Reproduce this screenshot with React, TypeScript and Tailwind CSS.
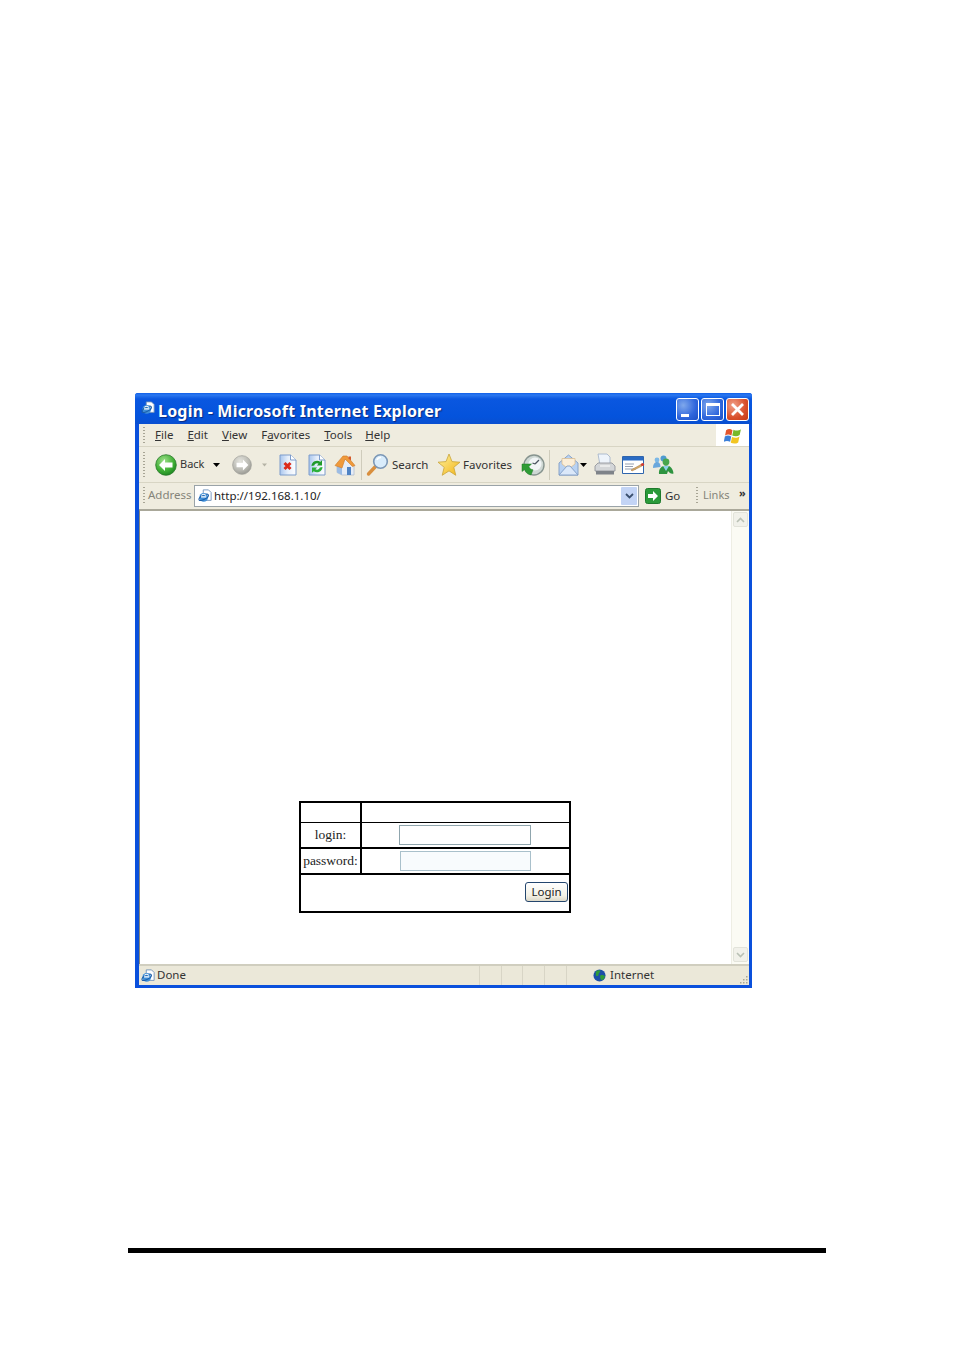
const ui = { fontFamily: '"Noto Sans", "Liberation Sans", sans-serif' };

function IePage({ size = 14 }: { size?: number }) {
  return (
    <svg width={size} height={size} viewBox="0 0 16 16" className="shrink-0">
      <path d="M6 1h6l3 3v9H6z" fill="#fff" stroke="#6d8fb8" strokeWidth="1" />
      <circle cx="6.5" cy="9.5" r="5" fill="#3f8fd8" />
      <ellipse cx="6.5" cy="9.5" rx="6" ry="2.4" fill="none" stroke="#1b5ea8" strokeWidth="1.2" transform="rotate(-30 6.5 9.5)" />
      <path d="M3.5 9h6M4 7.5c1-2 4-2 5 0" stroke="#fff" strokeWidth="1.2" fill="none" />
    </svg>
  );
}

function CircleArrow({ gray = false }: { gray?: boolean }) {
  const id = gray ? "fwd" : "back";
  return (
    <svg width={gray ? 20 : 22} height={gray ? 20 : 22} viewBox="0 0 22 22" className="shrink-0">
      <defs>
        <radialGradient id={id} cx="0.4" cy="0.3" r="0.8">
          <stop offset="0" stopColor={gray ? "#e4e4de" : "#9fe08a"} />
          <stop offset="0.6" stopColor={gray ? "#b9b9b2" : "#3fae35"} />
          <stop offset="1" stopColor={gray ? "#8f8f88" : "#137a1c"} />
        </radialGradient>
      </defs>
      <circle cx="11" cy="11" r="10.3" fill={`url(#${id})`} stroke={gray ? "#a0a09a" : "#2a7a2a"} strokeWidth="0.8" />
      {gray ? (
        <path d="M12 5l6 6-6 6v-3.600H5V8.600h7z" fill="#fff" />
      ) : (
        <path d="M10 5l-6 6 6 6v-3.600h7.500V8.600H10z" fill="#fff" />
      )}
    </svg>
  );
}

function Caret({ color = "#000", w = 7 }: { color?: string; w?: number }) {
  return (
    <svg width={w} height="4" viewBox="0 0 7 4" className="shrink-0">
      <path d="M0 0h7L3.500 4z" fill={color} />
    </svg>
  );
}

function PageSheet({ id }: { id: string }) {
  return (
    <>
      <defs>
        <linearGradient id={id} x1="0" y1="0" x2="1" y2="0">
          <stop offset="0" stopColor="#a9c6ee" />
          <stop offset="0.5" stopColor="#e6effb" />
          <stop offset="1" stopColor="#fdfeff" />
        </linearGradient>
      </defs>
      <path d="M1 1h10.500L17 6v15H1z" fill={`url(#${id})`} stroke="#7d9ccb" />
      <path d="M11.500 1v5H17" fill="#fff" stroke="#7d9ccb" />
    </>
  );
}

function StopIcon() {
  return (
    <svg width="18" height="22" viewBox="0 0 18 22" className="shrink-0">
      <PageSheet id="stopPage" />
      <path d="M5.500 9l6 6M11.500 9l-6 6" stroke="#dc2a1a" strokeWidth="3" />
    </svg>
  );
}

function RefreshIcon() {
  return (
    <svg width="18" height="22" viewBox="0 0 18 22" className="shrink-0">
      <PageSheet id="refreshPage" />
      <path d="M3.500 12a5.500 5.500 0 0 1 8.800-4.200L14 6.200v5.300H8.800l1.800-1.800a3 3 0 0 0-4.400 1.800z" fill="#1f9a2a" />
      <path d="M14.500 13a5.500 5.500 0 0 1-8.800 4.200L4 18.800v-5.300h5.200l-1.800 1.800a3 3 0 0 0 4.400-1.800z" fill="#2bb03a" />
    </svg>
  );
}

function HomeIcon() {
  return (
    <svg width="22" height="22" viewBox="0 0 22 22" className="shrink-0">
      <path d="M3 11l2.500-2L12 5l8 6v10H8l-5-2.500z" fill="#e6edf7" stroke="#a9b8cc" strokeWidth="0.700" />
      <path d="M3 11l5 3v7l-5-2.500z" fill="#9cbce4" />
      <path d="M1 11.500L9 2h4l8 9.500-2.500 1L11 5 8 14z" fill="#ef9a3c" stroke="#cf7a26" strokeWidth="0.600" />
      <path d="M13 13h4v8h-4z" fill="#4f83c4" />
      <path d="M14.500 2.500h2.500v4l-2.500-2z" fill="#d45a2a" />
    </svg>
  );
}

function SearchIcon() {
  return (
    <svg width="24" height="24" viewBox="0 0 24 24" className="shrink-0">
      <path d="M9.500 13.500L2.500 21" stroke="#d98f3e" strokeWidth="3.400" strokeLinecap="round" />
      <circle cx="14.500" cy="8.500" r="6.800" fill="#d9ecfb" stroke="#7b97b6" strokeWidth="1.600" />
      <path d="M11 7a4 4 0 0 1 4-2.500" stroke="#fff" strokeWidth="1.600" fill="none" />
    </svg>
  );
}

function StarIcon() {
  return (
    <svg width="24" height="24" viewBox="0 0 24 24" className="shrink-0">
      <defs>
        <linearGradient id="star" x1="0" y1="0" x2="1" y2="1">
          <stop offset="0" stopColor="#fff3a0" />
          <stop offset="1" stopColor="#f2b416" />
        </linearGradient>
      </defs>
      <path d="M12 1l3 7.600 8 .6-6.200 5.100 2 8-6.800-4.400-6.800 4.400 2-8L1 9.200l8-.6z" fill="url(#star)" stroke="#c9a43a" strokeWidth="0.800" />
    </svg>
  );
}

function HistoryIcon() {
  return (
    <svg width="24" height="24" viewBox="0 0 24 24" className="shrink-0">
      <circle cx="13" cy="12" r="10" fill="#cfd8d4" stroke="#87948f" strokeWidth="1.400" />
      <circle cx="14" cy="11" r="6.500" fill="#f1f5f6" />
      <path d="M14 11l4-4M14 11l-2.500-1" stroke="#4a5560" strokeWidth="1.300" />
      <path d="M1 11h9.500l-2.800 2.800c.8 1.600 2.300 2.700 4.300 3L10 22c-3.500-.5-5.500-2.600-6.300-5.400L1 18.500z" fill="#2f9c35" stroke="#1c7a26" strokeWidth="0.500" />
    </svg>
  );
}

function MailIcon() {
  return (
    <svg width="21" height="22" viewBox="0 0 21 22" className="shrink-0">
      <path d="M1 9l9.500-8L20 9v12H1z" fill="#b9d2f2" stroke="#7f9cc4" strokeWidth="0.900" />
      <path d="M4 10V4.500h13V10l-6.500 5z" fill="#fbeed8" stroke="#d8b98a" strokeWidth="0.700" />
      <path d="M1 21l8-9h3l8 9z" fill="#dbe8f9" stroke="#7f9cc4" strokeWidth="0.900" />
    </svg>
  );
}

function PrintIcon() {
  return (
    <svg width="22" height="23" viewBox="0 0 22 23" className="shrink-0">
      <path d="M4 1h9l3 3v8H6z" fill="#eef4fb" stroke="#9fb0c6" strokeWidth="0.800" />
      <path d="M1 13l3-3h14l3 3v5H1z" fill="#d4d6d8" stroke="#8b8e94" strokeWidth="0.800" />
      <path d="M2 18h18v3.500H2z" fill="#7f8389" />
      <path d="M6 13h10" stroke="#f8f8f8" strokeWidth="1.200" />
    </svg>
  );
}

function EditIcon() {
  return (
    <svg width="23" height="18" viewBox="0 0 23 18" className="shrink-0">
      <path d="M.500.500h21v17h-21z" fill="#fff" stroke="#2f65ad" />
      <path d="M1 1h20v3.500H1z" fill="#2a6bc4" />
      <path d="M3 8h9M3 10.500h8M3 13h11" stroke="#8b95a8" strokeWidth="0.900" />
      <path d="M9 14l10-5.500 1 1.500-10 5z" fill="#d7b26c" stroke="#a36a38" strokeWidth="0.500" />
      <circle cx="20.500" cy="8.500" r="1.600" fill="#d43c2f" />
    </svg>
  );
}

function MessengerIcon() {
  return (
    <svg width="22" height="20" viewBox="0 0 22 20" className="shrink-0">
      <circle cx="5" cy="5" r="2.400" fill="#7cb8e6" />
      <path d="M1 13c0-3.500 1.500-6 4-6s3.500 2 3.500 5z" fill="#6aa7dc" />
      <circle cx="11.500" cy="3.500" r="3" fill="#4f9bd0" />
      <circle cx="14" cy="7" r="3.400" fill="#48a64c" />
      <path d="M7 19c-.5-5 2.500-8.500 7-8.500s7 3.500 7.500 8c-2 1-4-.5-5.500-2.500l-1 3z" fill="#2f9440" />
      <path d="M11 11l3 5 3-5" fill="#8fd0ea" />
    </svg>
  );
}

function GoIcon() {
  return (
    <svg width="16" height="16" viewBox="0 0 16 16" className="shrink-0">
      <rect x="0.500" y="0.500" width="15" height="15" rx="2" fill="#2a9a3a" stroke="#1d7a2c" />
      <path d="M8 3l5 5-5 5v-3H3V6h5z" fill="#fff" />
    </svg>
  );
}

function WinFlag() {
  return (
    <svg width="18" height="17" viewBox="0 0 17 16">
      <path d="M2 3c2-1.500 4-1.500 6 0l-1 5c-2-1.200-4-1.200-6 0z" fill="#e2552c" />
      <path d="M9 2.500c2 1.200 4.500 1.200 7-.5l-1.200 5.500c-2 1.400-4.600 1.400-7 .4z" fill="#78b82a" />
      <path d="M.8 9c2-1.200 4-1.200 6 0l-1 5c-2-1.200-4-1.200-6 0z" fill="#3b7fd8" />
      <path d="M7.600 9.500c2.400 1 5 1 7-.5l-1.200 5.500c-2 1.400-4.600 1.400-7 .4z" fill="#f2c522" />
    </svg>
  );
}

function Globe() {
  return (
    <svg width="13" height="13" viewBox="0 0 14 14" className="shrink-0">
      <circle cx="7" cy="7" r="6.500" fill="#1c4fa8" />
      <path d="M3 3c2-2 4-2 5-1 0 2-2 2-2 4s-2 2-3 1zM8 7c2-1 4 0 5 1-1 3-3 4-4 4-1-2-2-3-1-5z" fill="#2f9c3a" />
    </svg>
  );
}

function Grip({ h = 18 }: { h?: number }) {
  return (
    <div
      className="w-[2px] shrink-0 bg-[repeating-linear-gradient(to_bottom,#a8a595_0,#a8a595_1px,transparent_1px,transparent_3px)]"
      style={{ height: h }}
    />
  );
}

function Chevron({ up = false }: { up?: boolean }) {
  return (
    <svg width="9" height="6" viewBox="0 0 9 6">
      <path d={up ? "M1 5l3.500-3.500L8 5" : "M1 1l3.500 3.500L8 1"} fill="none" stroke="#b9c0b4" strokeWidth="1.600" />
    </svg>
  );
}

function ScrollButton({ up = false }: { up?: boolean }) {
  return (
    <div className="flex h-[15px] w-[15px] items-center justify-center rounded-[2px] border border-[#e2e3da] bg-[#f1f1ea]">
      <Chevron up={up} />
    </div>
  );
}

function Menu({ label, mark, ml }: { label: string; mark: number; ml: string }) {
  return (
    <span className={`${ml} text-[11.5px] leading-none text-[#333]`}>
      {label.slice(0, mark)}
      <span className="underline underline-offset-1">{label[mark]}</span>
      {label.slice(mark + 1)}
    </span>
  );
}

function TitleButton({ close = false, children }: { close?: boolean; children: React.ReactNode }) {
  return (
    <div
      className={`flex h-[23px] w-[23px] items-center justify-center rounded-[3px] border border-white ${
        close
          ? "bg-[radial-gradient(circle_at_30%_30%,#f0a088,#d9502c_60%,#c43a18)]"
          : "bg-[radial-gradient(circle_at_30%_30%,#7fa8ec,#2f66dc_60%,#1d50c4)]"
      }`}
    >
      {children}
    </div>
  );
}

export default function App() {
  return (
    <div className="relative h-[1354px] w-[954px] overflow-hidden bg-white pl-[128px] pt-[393px]" style={ui}>
      {/* IE window */}
      <div className="ml-[7px] flex h-[595px] w-[617px] flex-col rounded-t-[3px] bg-[#0a50dc] px-[4px] pb-[3px] pr-[3px]">
        {/* Title bar */}
        <div className="-mx-[4px] -mr-[3px] flex h-[31px] shrink-0 items-center rounded-t-[3px] bg-[linear-gradient(to_bottom,#0f5fe8_0,#2b78f0_2px,#0a57e0_6px,#0453dc_24px,#0a4fd0_100%)] pl-[6px] pr-[3px]">
          <div className="mb-[1px]">
            <IePage size={14} />
          </div>
          <span className="ml-[3px] mt-[5px] text-[16px] font-bold leading-none tracking-[0.21px] text-white [text-shadow:1px_1px_1px_#0a2a80]">
            Login - Microsoft Internet Explorer
          </span>
          <div className="ml-auto mt-[1px] flex gap-[2px]">
            <TitleButton>
              <div className="mr-[5px] mt-[13px] h-[3px] w-[8px] bg-white" />
            </TitleButton>
            <TitleButton>
              <div className="h-[13px] w-[14px] border border-t-[3px] border-white" />
            </TitleButton>
            <TitleButton close>
              <svg width="15" height="15" viewBox="0 0 15 15">
                <path d="M2 2l11 11M13 2L2 13" stroke="#fff" strokeWidth="2.800" />
              </svg>
            </TitleButton>
          </div>
        </div>

        {/* Menu bar */}
        <div className="flex h-[23px] shrink-0 items-center border-b border-[#d8d5c4] bg-[#efecdf] pl-[4px]">
          <Grip h={17} />
          <Menu label="File" mark={0} ml="ml-[10px]" />
          <Menu label="Edit" mark={0} ml="ml-[14px]" />
          <Menu label="View" mark={0} ml="ml-[14px]" />
          <Menu label="Favorites" mark={1} ml="ml-[14px]" />
          <Menu label="Tools" mark={0} ml="ml-[14px]" />
          <Menu label="Help" mark={0} ml="ml-[13px]" />
          <div className="ml-auto flex h-full w-[33px] items-center justify-center bg-white">
            <WinFlag />
          </div>
        </div>

        {/* Toolbar */}
        <div className="flex h-[36px] shrink-0 items-center border-b border-[#d8d5c4] bg-[#efecdf] pl-[4px] text-[11.5px] text-[#333]">
          <Grip h={26} />
          <div className="ml-[10px]"><CircleArrow /></div>
          <span className="ml-[3px] w-[27px] text-[11px]">Back</span>
          <div className="ml-[6px]"><Caret /></div>
          <div className="ml-[12px]"><CircleArrow gray /></div>
          <div className="ml-[10px]"><Caret color="#b5b3a6" w={5} /></div>
          <div className="ml-[12px]"><StopIcon /></div>
          <div className="ml-[11px]"><RefreshIcon /></div>
          <div className="ml-[8px]"><HomeIcon /></div>
          <div className="ml-[5px] h-[30px] w-[1px] bg-[#cfccbc]" />
          <div className="ml-[4px]"><SearchIcon /></div>
          <span className="ml-[2px] w-[38px]">Search</span>
          <div className="ml-[7px]"><StarIcon /></div>
          <span className="ml-[2px] w-[50px]">Favorites</span>
          <div className="ml-[8px]"><HistoryIcon /></div>
          <div className="ml-[4px] h-[30px] w-[1px] bg-[#cfccbc]" />
          <div className="ml-[8px]"><MailIcon /></div>
          <div className="ml-[1px]"><Caret /></div>
          <div className="ml-[7px]"><PrintIcon /></div>
          <div className="ml-[6px]"><EditIcon /></div>
          <div className="ml-[7px]"><MessengerIcon /></div>
        </div>

        {/* Address bar */}
        <div className="flex h-[26px] shrink-0 items-center bg-[#efecdf] pl-[4px] text-[11.5px]">
          <Grip h={18} />
          <span className="mb-[2px] ml-[3px] w-[42px] text-[#85847a]">Address</span>
          <div className="ml-[4px] flex h-[22px] w-[445px] items-center border border-[#9aa3a8] bg-white pl-[3px] pr-[1px]">
            <IePage size={14} />
            <span className="mb-[1px] ml-[2px] text-[#222]">http://192.168.1.10/</span>
            <div className="ml-auto flex h-[18px] w-[16px] items-center justify-center rounded-[1px] bg-[#c3d4f5]">
              <svg width="9" height="7" viewBox="0 0 9 7">
                <path d="M1 1l3.500 3.500L8 1" fill="none" stroke="#3a4f6e" strokeWidth="1.800" />
              </svg>
            </div>
          </div>
          <div className="ml-[6px]"><GoIcon /></div>
          <span className="ml-[4px] w-[15px] text-[#333]">Go</span>
          <div className="ml-[16px]"><Grip h={18} /></div>
          <span className="mb-[2px] ml-[5px] w-[28px] text-[11px] text-[#85847a]">Links</span>
          <span className="mb-[7px] ml-[8px] text-[11px] font-bold leading-none text-[#333]">»</span>
        </div>

        {/* Page area */}
        <div className="flex min-h-0 flex-1 border-l border-t-2 border-[#8a887c] border-t-[#aaa89a] bg-white">
          <div className="flex-1 pl-[159px] pt-[290px]">
            <div className="w-[272px] border-2 border-black font-['Liberation_Serif',serif] text-[13.5px] text-[#222]">
              <div className="flex h-[20px] border-b border-black">
                <div className="w-[61px] border-r-2 border-black" />
              </div>
              <div className="flex h-[26px] border-b-2 border-black">
                <div className="flex w-[61px] items-center justify-center border-r-2 border-black">login:</div>
                <div className="pl-[37px] pt-[2px]">
                  <div className="h-[20px] w-[132px] border border-[#8fa5ad] bg-white" />
                </div>
              </div>
              <div className="flex h-[26px] border-b-2 border-black">
                <div className="flex w-[61px] items-center justify-center border-r-2 border-black">password:</div>
                <div className="pl-[38px] pt-[2px]">
                  <div className="h-[20px] w-[131px] border border-[#a9c0cb] bg-[#f8fbfd]" />
                </div>
              </div>
              <div className="flex h-[36px] justify-end pr-[1px] pt-[7px]">
                <div
                  className="flex h-[20px] w-[43px] items-center justify-center rounded-[3px] border border-[#24466e] bg-[linear-gradient(to_bottom,#fff,#f3f1e6_70%,#dcd8c8)] text-[11.5px] text-[#222]"
                  style={ui}
                >
                  Login
                </div>
              </div>
            </div>
          </div>
          {/* Scrollbar */}
          <div className="flex w-[18px] flex-col items-center justify-between border-l border-[#eeeee4] bg-[#fbfbf4] pb-[2px] pt-[1px]">
            <ScrollButton up />
            <ScrollButton />
          </div>
        </div>

        {/* Status bar */}
        <div className="flex h-[21px] shrink-0 items-center border-t-2 border-[#d0cebf] bg-[#ebe8d9] pl-[2px] text-[11.5px] text-[#333]">
          <IePage size={14} />
          <span className="mb-[2px] ml-[2px] w-[322px]">Done</span>
          <div className="h-full w-[1px] bg-[#d8d5c6]" />
          <div className="ml-[21px] h-full w-[1px] bg-[#d8d5c6]" />
          <div className="ml-[20px] h-full w-[1px] bg-[#d8d5c6]" />
          <div className="ml-[21px] h-full w-[1px] bg-[#d8d5c6]" />
          <div className="ml-[21px] h-full w-[1px] bg-[#d8d5c6]" />
          <div className="ml-[26px]"><Globe /></div>
          <span className="mb-[2px] ml-[4px]">Internet</span>
          <svg width="10" height="10" viewBox="0 0 10 10" className="ml-auto mr-[1px] mt-[8px]">
            <path d="M8 1h1.500v1.500H8zM5 4h1.500v1.500H5zM8 4h1.500v1.500H8zM2 7h1.500v1.500H2zM5 7h1.500v1.500H5zM8 7h1.500v1.500H8z" fill="#a9a795" />
          </svg>
        </div>
      </div>

      {/* Page rule */}
      <div className="mt-[260px] h-[5px] w-[698px] bg-black" />
    </div>
  );
}
